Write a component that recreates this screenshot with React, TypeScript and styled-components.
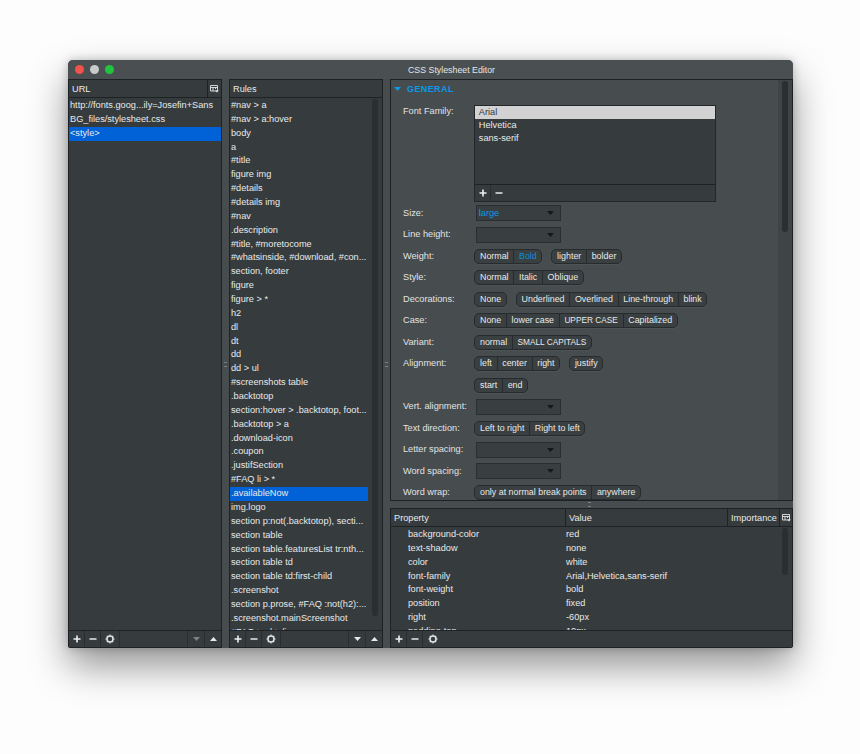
import styled, { createGlobalStyle } from "styled-components";

const GlobalStyle = createGlobalStyle`
  html, body {
    margin: 0;
    padding: 0;
    background: #fdfdfd;
  }
  body {
    font-family: "Liberation Sans", Arial, sans-serif;
    font-size: 9.2px;
    color: #e8eaea;
  }
`;

const Page = styled.div`
  width: 860px;
  height: 754px;
  padding: 60px 0 0 68px;
  box-sizing: border-box;
  overflow: hidden;
`;

const Window = styled.div`
  width: 725px;
  height: 588px;
  display: flex;
  flex-direction: column;
  background: #474c4f;
  border-radius: 5px 5px 3px 3px;
  box-shadow: 0 18px 38px rgba(0, 0, 0, 0.42), 0 0 10px rgba(0, 0, 0, 0.22);
  overflow: hidden;
`;

const TitleBar = styled.div`
  height: 19px;
  flex: none;
  display: flex;
  align-items: center;
  padding-left: 7px;
  background: #4a4f52;
  position: relative;
`;

const Light = styled.span<{ $color: string }>`
  width: 9px;
  height: 9px;
  border-radius: 50%;
  margin-right: 6px;
  background: ${(p) => p.$color};
`;

const Title = styled.div`
  margin-left: 288px;
  font-size: 8.8px;
  color: #e3e6e6;
`;

const Body = styled.div`
  flex: 1;
  display: flex;
  gap: 7px;
  min-height: 0;
  position: relative;
`;

const Panel = styled.div<{ $width?: string; $bg?: string }>`
  width: ${(p) => p.$width || "auto"};
  flex: ${(p) => (p.$width ? "none" : "1")};
  display: flex;
  flex-direction: column;
  box-sizing: border-box;
  min-height: 0;
  background: ${(p) => p.$bg || "#363b3d"};
  border: 1px solid #1f2224;
  position: relative;
`;

const HeaderRow = styled.div`
  height: 17px;
  flex: none;
  display: flex;
  border-bottom: 1px solid #1f2224;
`;

const HeaderCell = styled.div<{ $width?: number }>`
  width: ${(p) => (p.$width ? `${p.$width}px` : "auto")};
  flex: ${(p) => (p.$width ? "none" : "1")};
  box-sizing: border-box;
  display: flex;
  align-items: center;
  padding-left: 3px;
  border-right: 1px solid #1f2224;
  &:last-child {
    border-right: none;
  }
`;

const IconCell = styled.div`
  width: 13px;
  flex: none;
  display: flex;
  align-items: center;
  justify-content: center;
`;

const Rows = styled.div`
  flex: 1;
  min-height: 0;
  overflow: hidden;
  padding-top: 1px;
`;

const Row = styled.div<{ $selected?: boolean }>`
  height: 13.87px;
  line-height: 13.87px;
  padding-left: 1px;
  white-space: nowrap;
  background: ${(p) => (p.$selected ? "#0062d6" : "transparent")};
`;

const RuleRows = styled(Rows)`
  margin-right: 14px;
`;

const PropertyRow = styled.div`
  height: 13.87px;
  line-height: 13.87px;
  display: flex;
  white-space: nowrap;
`;

const PropertyName = styled.div`
  width: 175px;
  padding-left: 17px;
  box-sizing: border-box;
`;

const Footer = styled.div`
  height: 17px;
  flex: none;
  display: flex;
  border-top: 1px solid #1f2224;
  box-sizing: border-box;
`;

const FootButton = styled.div<{ $width?: number }>`
  width: ${(p) => p.$width ?? 16}px;
  flex: none;
  display: flex;
  align-items: center;
  justify-content: center;
  box-sizing: border-box;
  border-right: 1px solid #2a2e30;
  &:last-child {
    border-right: none;
  }
`;

const FootSpacer = styled.div`
  flex: 1;
  border-right: 1px solid #2a2e30;
`;

const Scrollbar = styled.div<{ $top: number; $height: number; $right: number }>`
  position: absolute;
  top: ${(p) => p.$top}px;
  right: ${(p) => p.$right}px;
  width: 6px;
  height: ${(p) => p.$height}px;
  border-radius: 3px;
  background: #2b2f31;
`;

const RightColumn = styled.div`
  flex: 1;
  min-width: 0;
  display: flex;
  flex-direction: column;
  gap: 7px;
  position: relative;
`;

const General = styled(Panel)`
  height: 422px;
  flex: none;
  overflow: hidden;
`;

const ScrollGutter = styled.div`
  position: absolute;
  top: 0;
  bottom: 0;
  right: 0;
  width: 14px;
  background: #3f4447;
`;

const SectionHead = styled.div`
  height: 17px;
  flex: none;
  display: flex;
  align-items: center;
  gap: 6px;
  padding-left: 3px;
  color: #0a9ae8;
  font-weight: bold;
  font-size: 9px;
  letter-spacing: 0.4px;
`;

const Form = styled.div`
  flex: none;
  padding-left: 12px;
  padding-top: 8px;
`;

const FieldRow = styled.div<{ $tall?: boolean }>`
  height: ${(p) => (p.$tall ? "97.25px" : "21.5px")};
  display: flex;
  align-items: ${(p) => (p.$tall ? "flex-start" : "center")};
  white-space: nowrap;
`;

const Label = styled.div`
  width: 71.3px;
  flex: none;
  line-height: 13px;
  color: #e0e3e3;
`;

const ListBox = styled.div`
  width: 241.5px;
  height: 97px;
  box-sizing: border-box;
  display: flex;
  flex-direction: column;
  background: #363b3d;
  border: 1px solid #23272a;
`;

const ListBoxRows = styled.div`
  flex: 1;
`;

const ListBoxRow = styled.div<{ $selected?: boolean }>`
  height: 13px;
  line-height: 13px;
  padding-left: 3.5px;
  color: ${(p) => (p.$selected ? "#34383a" : "inherit")};
  background: ${(p) => (p.$selected ? "#d2d2d2" : "transparent")};
`;

const Select = styled.div`
  margin-left: 1.5px;
  width: 85px;
  height: 16px;
  box-sizing: border-box;
  display: flex;
  align-items: center;
  justify-content: space-between;
  padding: 0 6px 0 2px;
  background: #393e40;
  border: 1px solid #2a2e30;
  color: #0a9ae8;
`;

const Segments = styled.div`
  display: flex;
  gap: 9px;
`;

const Group = styled.div`
  display: flex;
  height: 15px;
  box-sizing: border-box;
  border: 1px solid #272b2d;
  border-radius: 5px;
  background: #3a3f41;
  overflow: hidden;
  box-shadow: 0 1px 0 rgba(255, 255, 255, 0.04);
  font-size: 8.9px;
`;

const Segment = styled.div<{ $active?: boolean; $caps?: boolean }>`
  padding: 0 4.7px;
  line-height: 13px;
  border-right: 1px solid #272b2d;
  color: ${(p) => (p.$active ? "#0a8fdc" : "inherit")};
  font-size: ${(p) => (p.$caps ? "8.3px" : "inherit")};
  &:last-child {
    border-right: none;
  }
`;

const SplitDots = styled.div<{ $left: number; $top: number }>`
  position: absolute;
  left: ${(p) => p.$left}px;
  top: ${(p) => p.$top}px;
  width: 3px;
  height: 3px;
  border-top: 1px solid #7b8082;
  border-bottom: 1px solid #7b8082;
`;

const Plus = () => (
  <svg width="8" height="8" viewBox="0 0 8 8">
    <path d="M4 .5v7M.5 4h7" stroke="#f0f1f1" strokeWidth="1.6" />
  </svg>
);

const Minus = () => (
  <svg width="8" height="8" viewBox="0 0 8 8">
    <path d="M.5 4h7" stroke="#e8e9e9" strokeWidth="1.5" />
  </svg>
);

const Gear = () => (
  <svg width="10" height="10" viewBox="0 0 10 10">
    <circle cx="5" cy="5" r="3" fill="none" stroke="#e4e6e6" strokeWidth="1.5" />
    <path
      d="M5 .4v1.4M5 8.2v1.4M.4 5h1.4M8.2 5h1.4M1.8 1.8l1 1M7.2 7.2l1 1M1.8 8.2l1-1M7.2 2.8l1-1"
      stroke="#e4e6e6"
      strokeWidth="1.1"
    />
  </svg>
);

const Triangle = ({ up, color = "#e8e9e9" }: { up?: boolean; color?: string }) => (
  <svg width="7" height="4" viewBox="0 0 7 4">
    <path d={up ? "M0 4 3.5 0 7 4Z" : "M0 0h7L3.5 4Z"} fill={color} />
  </svg>
);

const ColumnsIcon = () => (
  <svg width="9" height="8" viewBox="0 0 9 8">
    <path d="M.5.5h7v5.5h-7zM.5 2.5h7M3 2.5V6M5.5 2.5V4" fill="none" stroke="#e4e6e6" strokeWidth="0.9" />
    <path d="M5.2 5.4h3.6L7 7.6Z" fill="#e4e6e6" />
  </svg>
);

const urls = ["http://fonts.goog...ily=Josefin+Sans", "BG_files/stylesheet.css", "<style>"];

const rules = [
  "#nav > a",
  "#nav > a:hover",
  "body",
  "a",
  "#title",
  "figure img",
  "#details",
  "#details img",
  "#nav",
  ".description",
  "#title, #moretocome",
  "#whatsinside, #download, #con...",
  "section, footer",
  "figure",
  "figure > *",
  "h2",
  "dl",
  "dt",
  "dd",
  "dd > ul",
  "#screenshots table",
  ".backtotop",
  "section:hover > .backtotop, foot...",
  ".backtotop > a",
  ".download-icon",
  ".coupon",
  ".justifSection",
  "#FAQ li > *",
  ".availableNow",
  "img.logo",
  "section p:not(.backtotop), secti...",
  "section table",
  "section table.featuresList tr:nth...",
  "section table td",
  "section table td:first-child",
  ".screenshot",
  "section p.prose, #FAQ :not(h2):...",
  ".screenshot.mainScreenshot",
  "#FAQ > ul > li",
];

const properties = [
  ["background-color", "red"],
  ["text-shadow", "none"],
  ["color", "white"],
  ["font-family", "Arial,Helvetica,sans-serif"],
  ["font-weight", "bold"],
  ["position", "fixed"],
  ["right", "-60px"],
  ["padding-top", "10px"],
];

type SegmentData = { text: string; active?: boolean; caps?: boolean };

type Field =
  | { label: string; select: string }
  | { label: string; groups: SegmentData[][] };

const seg = (...names: string[]): SegmentData[] => names.map((text) => ({ text }));

const fields: Field[] = [
  { label: "Size:", select: "large" },
  { label: "Line height:", select: "" },
  { label: "Weight:", groups: [[{ text: "Normal" }, { text: "Bold", active: true }], seg("lighter", "bolder")] },
  { label: "Style:", groups: [seg("Normal", "Italic", "Oblique")] },
  { label: "Decorations:", groups: [seg("None"), seg("Underlined", "Overlined", "Line-through", "blink")] },
  {
    label: "Case:",
    groups: [[...seg("None", "lower case"), { text: "UPPER CASE", caps: true }, ...seg("Capitalized")]],
  },
  { label: "Variant:", groups: [[...seg("normal"), { text: "SMALL CAPITALS", caps: true }]] },
  { label: "Alignment:", groups: [seg("left", "center", "right"), seg("justify")] },
  { label: "", groups: [seg("start", "end")] },
  { label: "Vert. alignment:", select: "" },
  { label: "Text direction:", groups: [seg("Left to right", "Right to left")] },
  { label: "Letter spacing:", select: "" },
  { label: "Word spacing:", select: "" },
  { label: "Word wrap:", groups: [seg("only at normal break points", "anywhere")] },
];

export default function App() {
  return (
    <Page>
      <GlobalStyle />
      <Window>
        <TitleBar>
          <Light $color="#f2524c" />
          <Light $color="#c9cbcb" />
          <Light $color="#22c33e" />
          <Title>CSS Stylesheet Editor</Title>
        </TitleBar>
        <Body>
          <Panel $width="154px">
            <HeaderRow>
              <HeaderCell>URL</HeaderCell>
              <IconCell>
                <ColumnsIcon />
              </IconCell>
            </HeaderRow>
            <Rows>
              {urls.map((u, i) => (
                <Row key={u} $selected={i === 2}>
                  {u}
                </Row>
              ))}
            </Rows>
            <Footer>
              <FootButton>
                <Plus />
              </FootButton>
              <FootButton>
                <Minus />
              </FootButton>
              <FootButton $width={19}>
                <Gear />
              </FootButton>
              <FootSpacer />
              <FootButton $width={17}>
                <Triangle color="#7c8183" />
              </FootButton>
              <FootButton $width={16}>
                <Triangle up />
              </FootButton>
            </Footer>
          </Panel>
          <SplitDots $left={155.5} $top={283} />
          <Panel $width="154px">
            <HeaderRow>
              <HeaderCell>Rules</HeaderCell>
            </HeaderRow>
            <RuleRows>
              {rules.map((r, i) => (
                <Row key={r} $selected={i === 28}>
                  {r}
                </Row>
              ))}
            </RuleRows>
            <Scrollbar $top={19} $height={517} $right={4} />
            <Footer>
              <FootButton>
                <Plus />
              </FootButton>
              <FootButton>
                <Minus />
              </FootButton>
              <FootButton $width={19}>
                <Gear />
              </FootButton>
              <FootSpacer />
              <FootButton $width={17}>
                <Triangle />
              </FootButton>
              <FootButton $width={16}>
                <Triangle up />
              </FootButton>
            </Footer>
          </Panel>
          <SplitDots $left={316.5} $top={283} />
          <RightColumn>
            <General $bg="#474c4f">
              <ScrollGutter />
              <Scrollbar $top={1} $height={151} $right={4} />
              <SectionHead>
                <Triangle color="#0a9ae8" />
                GENERAL
              </SectionHead>
              <Form>
                <FieldRow $tall>
                  <Label>Font Family:</Label>
                  <ListBox>
                    <ListBoxRows>
                      <ListBoxRow $selected>Arial</ListBoxRow>
                      <ListBoxRow>Helvetica</ListBoxRow>
                      <ListBoxRow>sans-serif</ListBoxRow>
                    </ListBoxRows>
                    <Footer>
                      <FootButton>
                        <Plus />
                      </FootButton>
                      <FootButton>
                        <Minus />
                      </FootButton>
                    </Footer>
                  </ListBox>
                </FieldRow>
                {fields.map((f, i) => (
                  <FieldRow key={i}>
                    <Label>{f.label}</Label>
                    {"select" in f ? (
                      <Select>
                        {f.select || <span />}
                        <Triangle color="#15181a" />
                      </Select>
                    ) : (
                      <Segments>
                        {f.groups.map((g, j) => (
                          <Group key={j}>
                            {g.map((s) => (
                              <Segment key={s.text} $active={s.active} $caps={s.caps}>
                                {s.text}
                              </Segment>
                            ))}
                          </Group>
                        ))}
                      </Segments>
                    )}
                  </FieldRow>
                ))}
              </Form>
            </General>
            <SplitDots $left={198} $top={423} />
            <Panel>
              <HeaderRow>
                <HeaderCell $width={175}>Property</HeaderCell>
                <HeaderCell $width={162}>Value</HeaderCell>
                <HeaderCell $width={52}>Importance</HeaderCell>
                <IconCell>
                  <ColumnsIcon />
                </IconCell>
              </HeaderRow>
              <Rows>
                {properties.map(([name, value]) => (
                  <PropertyRow key={name}>
                    <PropertyName>{name}</PropertyName>
                    <div>{value}</div>
                  </PropertyRow>
                ))}
              </Rows>
              <Scrollbar $top={19} $height={47} $right={4} />
              <Footer>
                <FootButton>
                  <Plus />
                </FootButton>
                <FootButton>
                  <Minus />
                </FootButton>
                <FootButton $width={19}>
                  <Gear />
                </FootButton>
              </Footer>
            </Panel>
          </RightColumn>
        </Body>
      </Window>
    </Page>
  );
}
